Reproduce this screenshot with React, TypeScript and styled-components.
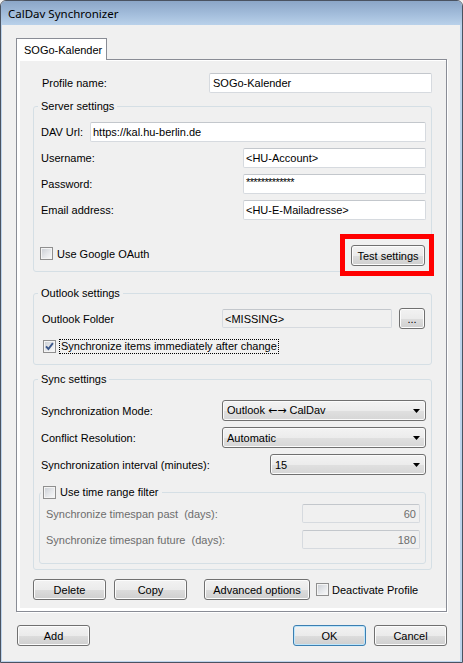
import React from "react";
import styled, { createGlobalStyle } from "styled-components";

const GlobalStyle = createGlobalStyle`
  html, body {
    margin: 0;
    padding: 0;
    background: #f0f0f0;
  }
  body {
    font-family: "Liberation Sans", Arial, sans-serif;
    font-size: 11px;
    color: #000;
  }
  * {
    box-sizing: border-box;
  }
`;

const Window = styled.div`
  width: 463px;
  height: 663px;
  display: flex;
  flex-direction: column;
  border: 1px solid #4a5361;
  border-radius: 6px 6px 0 0;
  overflow: hidden;
  background: #f0f0f0;
`;

const TitleBar = styled.div`
  flex: none;
  height: 24px;
  display: flex;
  align-items: center;
  padding-left: 7px;
  background: linear-gradient(to bottom, #8ba6c7 0%, #a3bddb 55%, #b9d1ea 100%);
  font-family: "Noto Sans", "Open Sans", sans-serif;
  font-size: 11.5px;
`;

const Client = styled.div`
  flex: 1;
  display: flex;
  flex-direction: column;
  padding: 13px 13px 14px 14px;
  border-left: 1px solid #bcd3ec;
  border-right: 2px solid #bcd3ec;
  border-bottom: 1px solid #bcd3ec;
`;

/* tab control */
const TabHeader = styled.div`
  position: relative;
  z-index: 1;
  width: 91px;
  height: 22px;
  margin-bottom: -1px;
  padding-left: 7px;
  display: flex;
  align-items: center;
  background: #fff;
  border: 1px solid #898c95;
  border-bottom: none;
`;

const TabPane = styled.div`
  height: 553px;
  display: flex;
  border: 1px solid #898c95;
  background: #fff;
  padding: 1px 0 3px 3px;
  box-shadow: 1px 1px 0 #fff;
`;

const Panel = styled.div`
  flex: 1;
  display: flex;
  flex-direction: column;
  background: #f0f0f0;
  padding: 0 14px 0 13px;
`;

/* group boxes */
const Group = styled.fieldset<{ $pad: string; $mt: number; $ml?: number }>`
  margin: ${(p) => p.$mt}px 0 0 ${(p) => p.$ml ?? 0}px;
  min-width: 0;
  display: flex;
  flex-direction: column;
  border: 1px solid #d5dfe5;
  border-radius: 3px;
  padding: ${(p) => p.$pad};
`;

const Legend = styled.legend`
  height: 13px;
  line-height: 13px;
  padding: 0 3px;
  margin-left: -3px;
`;

const CheckLegend = styled.legend`
  height: 14px;
  display: flex;
  align-items: center;
  gap: 4px;
  padding: 0 4px 0 2px;
  margin-left: -5px;
`;

/* rows */
const FieldRow = styled.div<{ $mt?: number; $h?: number; $pl?: number }>`
  display: flex;
  align-items: center;
  justify-content: space-between;
  height: ${(p) => p.$h ?? 20}px;
  margin-top: ${(p) => p.$mt ?? 0}px;
  padding-left: ${(p) => p.$pl ?? 0}px;
`;

const Label = styled.span<{ $disabled?: boolean }>`
  white-space: pre;
  color: ${(p) => (p.$disabled ? "#6d6d6d" : "#000")};
`;

const TextBox = styled.div<{
  $w: number;
  $h?: number;
  $gray?: boolean;
  $disabled?: boolean;
  $right?: boolean;
}>`
  flex: none;
  width: ${(p) => p.$w}px;
  height: ${(p) => p.$h ?? 20}px;
  display: flex;
  align-items: center;
  justify-content: ${(p) => (p.$right ? "flex-end" : "flex-start")};
  padding: 0 3px 0 2px;
  border: 1px solid #d6dadf;
  border-top-color: #c3c7cc;
  border-radius: 2px;
  background: ${(p) => (p.$gray || p.$disabled ? "#f0f0f0" : "#fff")};
  color: ${(p) => (p.$disabled ? "#6d6d6d" : "#000")};
  white-space: pre;
  overflow: hidden;
`;

const PasswordText = styled.span`
  align-self: flex-start;
  margin-top: 1px;
  letter-spacing: -0.6px;
`;

const Combo = styled.div<{ $w: number }>`
  flex: none;
  width: ${(p) => p.$w}px;
  height: 21px;
  display: flex;
  align-items: center;
  justify-content: space-between;
  padding: 0 5px 0 4px;
  border: 1px solid #707070;
  border-radius: 3px;
  background: linear-gradient(to bottom, #f3f3f3 0%, #ececec 50%, #e0e0e0 51%, #d6d6d6 100%);
  box-shadow: inset 0 0 0 1px #fbfbfb;
  white-space: pre;
`;

const Arrows = styled.span`
  font-family: "DejaVu Sans", sans-serif;
  font-size: 11px;
`;

const Button = styled.button<{ $w?: number; $default?: boolean; $ml?: number; $mr?: number }>`
  flex: none;
  width: ${(p) => p.$w ?? 73}px;
  height: 21px;
  margin: 0 ${(p) => p.$mr ?? 0}px 0 ${(p) => p.$ml ?? 0}px;
  padding: 0;
  font: inherit;
  color: #000;
  border: 1px solid ${(p) => (p.$default ? "#3c7fb1" : "#707070")};
  border-radius: 3px;
  background: linear-gradient(to bottom, #f2f2f2 0%, #ebebeb 50%, #dddddd 51%, #cfcfcf 100%);
  box-shadow: inset 0 0 0 1px ${(p) => (p.$default ? "#bfe6fb" : "#fcfcfc")};
  white-space: pre;
`;

const CheckLabel = styled.label<{ $mt?: number; $ml?: number; $gap?: number }>`
  display: flex;
  align-items: center;
  gap: ${(p) => p.$gap ?? 4}px;
  margin: ${(p) => p.$mt ?? 0}px 0 0 ${(p) => p.$ml ?? 0}px;
  white-space: pre;
`;

const CheckBox = styled.span`
  flex: none;
  width: 13px;
  height: 13px;
  display: block;
  border: 1px solid #8f8f8f;
  background: linear-gradient(135deg, #c9cdd3 0%, #e6e8eb 55%, #fafafa 100%);
  box-shadow: inset 0 0 0 1px #f4f4f4;
`;

const FocusText = styled.span`
  height: 15px;
  line-height: 13px;
  padding: 0 1px;
  border: 1px dotted #000;
`;

const OAuthRow = styled.div`
  display: flex;
  align-items: flex-start;
  justify-content: space-between;
  margin-top: 25px;
`;

const Spot = styled.div`
  position: relative;
  margin-right: 1px;
`;

const Highlight = styled.div`
  position: absolute;
  top: -11px;
  left: -11px;
  right: -9px;
  bottom: -10px;
  border: 5px solid #ff0000;
  pointer-events: none;
`;

const FolderRight = styled.div`
  display: flex;
  align-items: center;
  gap: 7px;
`;

const ButtonRow = styled.div`
  display: flex;
  align-items: center;
  margin-top: 9px;
`;

const Footer = styled.div`
  display: flex;
  align-items: center;
  margin-top: 13px;
`;

const Spacer = styled.div`
  flex: 1;
`;

function Check({ checked }: { checked?: boolean }) {
  return (
    <CheckBox>
      {checked && (
        <svg width="11" height="11" viewBox="0 0 11 11" style={{ display: "block" }}>
          <path d="M2 5.4 L4.4 8 L8.9 2.2" fill="none" stroke="#3b578a" strokeWidth="1.9" />
        </svg>
      )}
    </CheckBox>
  );
}

function Arrow() {
  return (
    <svg width="7" height="4" viewBox="0 0 7 4" style={{ display: "block" }}>
      <polygon points="0,0 7,0 3.5,4" fill="#000" />
    </svg>
  );
}

export default function App() {
  return (
    <>
      <GlobalStyle />
      <Window>
        <TitleBar>CalDav Synchronizer</TitleBar>
        <Client>
          <TabHeader>SOGo-Kalender</TabHeader>
          <TabPane>
            <Panel>
              <FieldRow $mt={12} $pl={9}>
                <Label>Profile name:</Label>
                <TextBox $w={223}>
                  <span style={{ paddingLeft: 1 }}>SOGo-Kalender</span>
                </TextBox>
              </FieldRow>

              <Group $mt={7} $pad="9px 5px 5px 7px">
                <Legend>Server settings</Legend>
                <FieldRow>
                  <Label>DAV Url:</Label>
                  <TextBox $w={336}>https://kal.hu-berlin.de</TextBox>
                </FieldRow>
                <FieldRow $mt={6}>
                  <Label>Username:</Label>
                  <TextBox $w={183}>&lt;HU-Account&gt;</TextBox>
                </FieldRow>
                <FieldRow $mt={6}>
                  <Label>Password:</Label>
                  <TextBox $w={183}>
                    <PasswordText>*************</PasswordText>
                  </TextBox>
                </FieldRow>
                <FieldRow $mt={6}>
                  <Label>Email address:</Label>
                  <TextBox $w={183}>&lt;HU-E-Mailadresse&gt;</TextBox>
                </FieldRow>
                <OAuthRow>
                  <CheckLabel $mt={2} $ml={-1}>
                    <Check />
                    Use Google OAuth
                  </CheckLabel>
                  <Spot>
                    <Button $w={74}>Test settings</Button>
                    <Highlight />
                  </Spot>
                </OAuthRow>
              </Group>

              <Group $mt={15} $pad="8px 6px 10px 7px">
                <Legend>Outlook settings</Legend>
                <FieldRow $h={21} $pl={1}>
                  <Label>Outlook Folder</Label>
                  <FolderRight>
                    <TextBox $w={170} $h={19} $gray>
                      &lt;MISSING&gt;
                    </TextBox>
                    <Button $w={26}>...</Button>
                  </FolderRight>
                </FieldRow>
                <FieldRow $mt={10} $h={15}>
                  <CheckLabel $ml={2} $gap={3}>
                    <Check checked />
                    <FocusText>Synchronize items immediately after change</FocusText>
                  </CheckLabel>
                </FieldRow>
              </Group>

              <Group $mt={8} $pad="14px 5px 5px 7px">
                <Legend>Sync settings</Legend>
                <FieldRow $h={21}>
                  <Label>Synchronization Mode:</Label>
                  <Combo $w={204}>
                    <span>
                      Outlook <Arrows>←→</Arrows> CalDav
                    </span>
                    <Arrow />
                  </Combo>
                </FieldRow>
                <FieldRow $h={21} $mt={6}>
                  <Label>Conflict Resolution:</Label>
                  <Combo $w={204}>
                    <span>Automatic</span>
                    <Arrow />
                  </Combo>
                </FieldRow>
                <FieldRow $h={21} $mt={6}>
                  <Label>Synchronization interval (minutes):</Label>
                  <Combo $w={156}>
                    <span>15</span>
                    <Arrow />
                  </Combo>
                </FieldRow>

                <Group $mt={10} $ml={-2} $pad="5px 5px 14px 6px">
                  <CheckLegend>
                    <Check />
                    Use time range filter
                  </CheckLegend>
                  <FieldRow $h={19}>
                    <Label $disabled>Synchronize timespan past  (days):</Label>
                    <TextBox $w={118} $h={19} $disabled $right>
                      60
                    </TextBox>
                  </FieldRow>
                  <FieldRow $h={19} $mt={7}>
                    <Label $disabled>Synchronize timespan future  (days):</Label>
                    <TextBox $w={118} $h={19} $disabled $right>
                      180
                    </TextBox>
                  </FieldRow>
                </Group>
              </Group>

              <ButtonRow>
                <Button>Delete</Button>
                <Button $ml={8}>Copy</Button>
                <Button $ml={17} $w={106}>
                  Advanced options
                </Button>
                <CheckLabel $ml={6} $gap={3}>
                  <Check />
                  Deactivate Profile
                </CheckLabel>
              </ButtonRow>
            </Panel>
          </TabPane>

          <Footer>
            <Button $ml={1}>Add</Button>
            <Spacer />
            <Button $default>OK</Button>
            <Button $ml={8}>Cancel</Button>
          </Footer>
        </Client>
      </Window>
    </>
  );
}
